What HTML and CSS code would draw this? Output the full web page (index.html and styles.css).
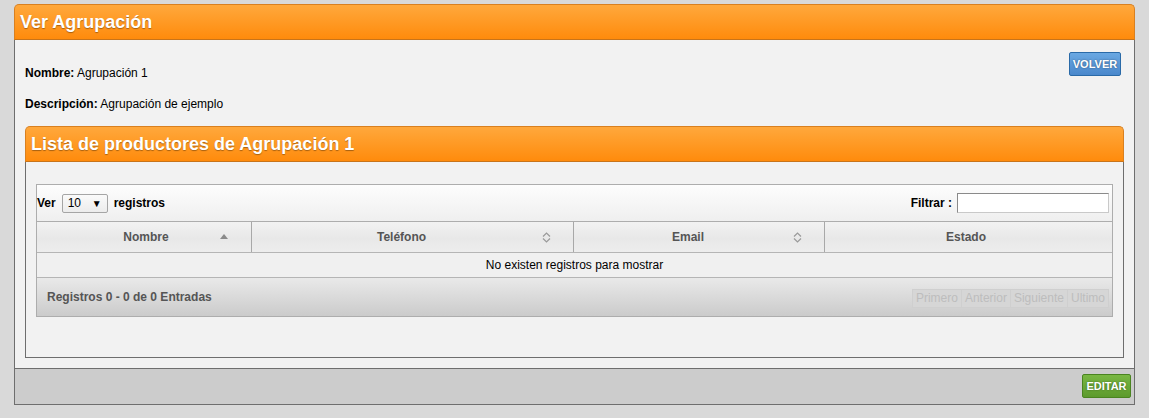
FILE: index.html
```html
<!DOCTYPE html>
<html lang="es">
<head>
<meta charset="utf-8">
<title>Ver Agrupación</title>
<link rel="stylesheet" href="styles.css">
</head>
<body>
<div class="page">
  <div class="panel">
    <div class="panel-head">Ver Agrupación</div>
    <div class="panel-body">
      <div class="top">
        <div class="info">
          <p class="line first"><b>Nombre:</b> Agrupación 1</p>
          <p class="line"><b>Descripción:</b> Agrupación de ejemplo</p>
        </div>
        <button class="btn btn-blue">VOLVER</button>
      </div>
      <div class="subpanel">
        <div class="subpanel-head">Lista de productores de Agrupación 1</div>
        <div class="subpanel-body">
          <div class="dt">
            <div class="dt-toolbar">
              <div class="dt-length">
                <span class="bold">Ver</span>
                <span class="select"><span class="select-val">10</span><span class="select-arrow">&#9660;</span></span>
                <span class="bold">registros</span>
              </div>
              <div class="dt-filter">
                <span class="bold">Filtrar :</span>
                <span class="input"></span>
              </div>
            </div>
            <div class="dt-head">
              <div class="th th-1">Nombre
                <svg class="sort sort-asc" width="8" height="5" viewBox="0 0 8 5"><path d="M0 5 L4 0 L8 5 Z" fill="#8a8a8a"/></svg>
              </div>
              <div class="th th-2">Teléfono
                <svg class="sort" width="9" height="11" viewBox="0 0 9 11"><path d="M1 4.5 L4.5 1 L8 4.5" fill="none" stroke="#9a9a9a" stroke-width="1.2"/><path d="M1 6.5 L4.5 10 L8 6.5" fill="none" stroke="#9a9a9a" stroke-width="1.2"/></svg>
              </div>
              <div class="th th-3">Email
                <svg class="sort" width="9" height="11" viewBox="0 0 9 11"><path d="M1 4.5 L4.5 1 L8 4.5" fill="none" stroke="#9a9a9a" stroke-width="1.2"/><path d="M1 6.5 L4.5 10 L8 6.5" fill="none" stroke="#9a9a9a" stroke-width="1.2"/></svg>
              </div>
              <div class="th th-4">Estado</div>
            </div>
            <div class="dt-empty">No existen registros para mostrar</div>
            <div class="dt-foot">
              <div class="dt-info">Registros 0 - 0 de 0 Entradas</div>
              <div class="dt-pages">
                <span class="pg">Primero</span><span class="pg">Anterior</span><span class="pg">Siguiente</span><span class="pg">Ultimo</span>
              </div>
            </div>
          </div>
        </div>
      </div>
    </div>
    <div class="panel-foot">
      <button class="btn btn-green">EDITAR</button>
    </div>
  </div>
</div>
</body>
</html>
```

FILE: styles.css
```css
html, body {
  margin: 0;
  padding: 0;
}
body {
  background: #d9d9d9;
  font-family: "Liberation Sans", Arial, sans-serif;
  font-size: 12px;
  color: #000;
}
.page {
  padding: 4px 0 0 14px;
}
.panel {
  width: 1121px;
}
.panel-head {
  box-sizing: border-box;
  height: 36px;
  padding-left: 5px;
  line-height: 35px;
  background: linear-gradient(#ffa83c, #ff8b0c);
  border: 1px solid #d98020;
  border-bottom: 1px solid #c8741a;
  border-radius: 5px 5px 0 0;
  color: #fff;
  font-size: 18px;
  font-weight: bold;
  text-shadow: 0 1px 1px rgba(0, 0, 0, 0.35);
}
.panel-body {
  background: #f2f2f2;
  border-left: 1px solid #6e6e6e;
  border-right: 1px solid #6e6e6e;
  padding: 12px 10px 10px 10px;
}
.top {
  display: flex;
  justify-content: space-between;
  align-items: flex-start;
}
.line {
  margin: 17px 0 0 0;
  line-height: 14px;
}
.line.first {
  margin-top: 14px;
}
.btn {
  box-sizing: border-box;
  height: 24px;
  padding: 0;
  font-family: "Liberation Sans", Arial, sans-serif;
  font-size: 11px;
  font-weight: bold;
  color: #fff;
  border-radius: 2px;
  text-shadow: 0 0 2px rgba(0, 0, 0, 0.45);
}
.btn-blue {
  width: 52px;
  margin-right: 3px;
  background: linear-gradient(#6aa8e2, #4a88cc);
  border: 1px solid #2a6aa8;
}
.btn-green {
  width: 49px;
  background: linear-gradient(#79b743, #5c9a2c);
  border: 1px solid #4a8420;
}
.subpanel {
  margin-top: 15px;
}
.subpanel-head {
  box-sizing: border-box;
  height: 36px;
  padding-left: 5px;
  line-height: 35px;
  background: linear-gradient(#ffa83c, #ff8b0c);
  border: 1px solid #d98020;
  border-bottom: 1px solid #c8741a;
  border-radius: 5px 5px 0 0;
  color: #fff;
  font-size: 18px;
  font-weight: bold;
  text-shadow: 0 1px 1px rgba(0, 0, 0, 0.35);
}
.subpanel-body {
  background: #f2f2f2;
  border: 1px solid #6e6e6e;
  border-top: none;
  padding: 22px 10px 40px 10px;
}
.dt {
  border: 1px solid #adadad;
}
.dt-toolbar {
  height: 36px;
  display: flex;
  align-items: center;
  justify-content: space-between;
  background: linear-gradient(#fdfdfd, #efefef);
  border-bottom: 1px solid #adadad;
  padding: 0 3px 0 0;
}
.bold {
  font-weight: bold;
}
.dt-length {
  display: flex;
  align-items: center;
}
.select {
  display: inline-flex;
  align-items: center;
  justify-content: space-between;
  box-sizing: border-box;
  width: 46px;
  height: 19px;
  margin: 0 6px 0 6px;
  padding: 0 5px 0 5px;
  background: linear-gradient(#fafafa, #ececec);
  border: 1px solid #a5a5a5;
  border-radius: 2px;
}
.select-arrow {
  font-size: 10px;
}
.dt-filter {
  display: flex;
  align-items: center;
}
.input {
  display: block;
  box-sizing: border-box;
  width: 152px;
  height: 20px;
  margin-left: 5px;
  background: #fff;
  border: 1px solid #c9c9c9;
  border-top-color: #8a8a8a;
  border-left-color: #8a8a8a;
}
.dt-head {
  display: flex;
  height: 30px;
  background: linear-gradient(#f2f2f2, #e8e8e8 55%, #ededed);
  border-bottom: 1px solid #b5b5b5;
}
.th {
  box-sizing: border-box;
  display: flex;
  align-items: center;
  justify-content: center;
  font-weight: bold;
  color: #555;
  position: relative;
}
.th + .th {
  border-left: 1px solid #a8a8a8;
}
.th-1 { width: 214px; padding-left: 4px; }
.th-2 { width: 322px; padding-right: 22px; }
.th-3 { width: 251px; padding-right: 22px; }
.th-4 { flex: 1; padding-right: 5px; }
.sort {
  position: absolute;
  top: 10px;
  right: 22px;
}
.sort-asc {
  top: 12px;
  right: 23px;
}
.dt-empty {
  height: 24px;
  line-height: 24px;
  text-align: center;
  background: #f0f0f0;
  border-bottom: 1px solid #b5b5b5;
}
.dt-foot {
  height: 38px;
  display: flex;
  align-items: center;
  justify-content: space-between;
  padding: 0 3px 0 10px;
  background: linear-gradient(#e9e9e9, #cbcbcb);
}
.dt-info {
  font-weight: bold;
  color: #555;
}
.dt-pages {
  display: flex;
  margin-top: 3px;
}
.pg {
  padding: 0 3px;
  height: 17px;
  line-height: 17px;
  color: #bdbdbd;
  background: #d6d6d6;
  border: 1px solid #cfcfcf;
  margin-left: -1px;
}
.panel-foot {
  box-sizing: border-box;
  height: 37px;
  display: flex;
  justify-content: flex-end;
  align-items: flex-start;
  padding: 5px 3px 0 0;
  background: #cccccc;
  border: 1px solid #6e6e6e;
}
```
